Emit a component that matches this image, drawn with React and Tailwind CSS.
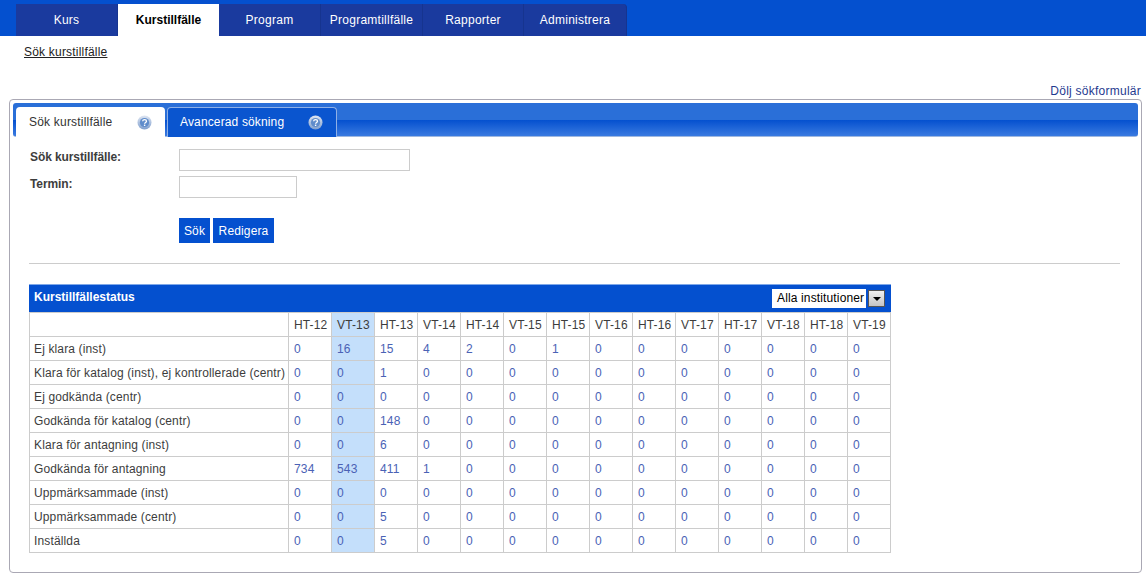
const navItems = [
  ["Kurs", "w-[102px]"],
  ["Kurstillfälle", "w-[101px]"],
  ["Program", "w-[102px]"],
  ["Programtillfälle", "w-[102px]"],
  ["Rapporter", "w-[101px]"],
  ["Administrera", "w-[103px]"],
];
const terms = ["HT-12", "VT-13", "HT-13", "VT-14", "HT-14", "VT-15", "HT-15", "VT-16", "HT-16", "VT-17", "HT-17", "VT-18", "HT-18", "VT-19"];
const rows = [
  ["Ej klara (inst)", [0, 16, 15, 4, 2, 0, 1]],
  ["Klara för katalog (inst), ej kontrollerade (centr)", [0, 0, 1]],
  ["Ej godkända (centr)", [0, 0, 0]],
  ["Godkända för katalog (centr)", [0, 0, 148]],
  ["Klara för antagning (inst)", [0, 0, 6]],
  ["Godkända för antagning", [734, 543, 411, 1]],
  ["Uppmärksammade (inst)", [0, 0, 0]],
  ["Uppmärksammade (centr)", [0, 0, 5]],
  ["Inställda", [0, 0, 5]],
];

function HelpIcon({ id }) {
  return (
    <svg width="15" height="15" viewBox="0 0 15 15">
      <defs>
        <linearGradient id={id} x1="0" y1="0" x2="0" y2="1">
          <stop offset="0" stopColor="#dfe6f2" />
          <stop offset="1" stopColor="#7f9fce" />
        </linearGradient>
      </defs>
      <circle cx="7.5" cy="7.5" r="7" fill={`url(#${id})`} />
      <circle cx="7.5" cy="7.5" r="4.6" fill="#5f8ccb" />
      <path d="M5.6 6.2c.2-2.2 3.9-2.2 3.9 0 0 1.3-1.9 1.3-1.9 2.6" fill="none" stroke="#fff" strokeWidth="1.3" />
      <rect x="6.9" y="9.6" width="1.4" height="1.4" fill="#fff" />
    </svg>
  );
}

export default function App() {
  return (
    <div className="w-[1146px] h-[579px] overflow-hidden bg-white text-[12px] tracking-[0.14px] text-[#3d3d3d] font-['Liberation_Sans',Arial,sans-serif]">
      <div className="h-9 bg-[#0450cf] pt-1 pl-4">
        <ul className="flex h-8">
          {navItems.map(([item, width], index) => (
            <li
              key={item}
              className={
                width + " flex items-center justify-center " +
                (index === 1
                  ? "bg-white text-black font-bold tracking-[0px]"
                  : "bg-[#1a3a9e] text-white tracking-[0.25px] border-r border-[#16348f] last:rounded-tr")
              }
            >
              {item}
            </li>
          ))}
        </ul>
      </div>

      <div className="pl-6 pt-[9px] h-[46px]">
        <a className="underline text-[#222] tracking-[0.2px] leading-[14px] block">Sök kurstillfälle</a>
      </div>

      <div className="h-[17px] pr-[5px] text-right text-[#1f3a8f] tracking-[0.25px] leading-[19px]">Dölj sökformulär</div>

      <div className="mx-[9px] w-[1133px] h-[474px] border border-[#aaa8b4] rounded-[4px] p-[3px]">
        <div className="relative h-[34px] rounded-[3px] bg-[linear-gradient(#2a6fd8_0,#2a6fd8_17px,#0450cf_17px,#3a7ae0_33px)] border-b border-[#9fb8e0] pt-1 pl-[3px] flex gap-[2px]">
          <div className="w-[149px] h-[30px] bg-white rounded-t-[4px] flex items-center justify-between pl-[13px] pr-[13px] text-[#333] tracking-[0.2px]">
            <span>Sök kurstillfälle</span>
            <HelpIcon id="help-a" />
          </div>
          <div className="w-[170px] h-[30px] bg-[#0a55cf] border border-b-0 border-[#8fb0e6] rounded-t-[4px] flex items-center justify-between pl-3 pr-[13px] pb-[1px] text-white">
            <span>Avancerad sökning</span>
            <HelpIcon id="help-b" />
          </div>
        </div>

        <div className="pl-4 pr-[18px]">
          <div className="flex pt-[12px] h-[39px]">
            <label className="w-[150px] pl-[1px] pt-[1px] font-bold tracking-[-0.1px] leading-[14px]">Sök kurstillfälle:</label>
            <input className="w-[231px] h-[22px] border border-[#ccc]" />
          </div>
          <div className="flex h-[42px]">
            <label className="w-[150px] pl-[1px] pt-[1px] font-bold tracking-[-0.1px] leading-[14px]">Termin:</label>
            <input className="w-[118px] h-[22px] border border-[#ccc]" />
          </div>
          <div className="flex gap-[3px] pl-[150px]">
            <button className="h-[25px] w-[31px] bg-[#0450cf] text-white">Sök</button>
            <button className="h-[25px] w-[61px] bg-[#0450cf] text-white">Redigera</button>
          </div>
          <div className="mt-5 border-t border-[#ccc]"></div>

          <div className="mt-5 w-[862px]">
            <div className="h-[29px] bg-[#0450cf] border-t border-[#7fa8e8] flex items-center justify-between pl-[5px] pr-[6px]">
              <span className="font-bold tracking-[0px] text-white -mt-[5px]">Kurstillfällestatus</span>
              <div className="flex items-center gap-[2px] -mt-[1px]">
                <div className="w-[94px] h-[19px] bg-white text-black pl-[5px] leading-[19px]">Alla institutioner</div>
                <div className="w-[17px] h-[17px] bg-[linear-gradient(#f0f0f0,#c4c4c4)] border border-[#555] flex items-center justify-center">
                  <span className="w-0 h-0 border-x-[4px] border-x-transparent border-t-[4px] border-t-black"></span>
                </div>
              </div>
            </div>
            <table className="table-fixed border-collapse w-[862px] -mt-px">
              <thead>
                <tr className="h-6">
                  <th className="w-[259px] border border-[#ccc]"></th>
                  {terms.map((term, index) => (
                    <th key={term} className={"font-normal text-left pl-[5px] border border-[#ccc] " + (index === 1 ? "bg-[#c4dffb]" : "")}>
                      {term}
                    </th>
                  ))}
                </tr>
              </thead>
              <tbody>
                {rows.map(([label, values]) => (
                  <tr key={label} className="h-6">
                    <td className="pl-1 border border-[#ccc] whitespace-nowrap">{label}</td>
                    {terms.map((term, index) => (
                      <td key={term} className={"pl-[5px] border border-[#ccc] text-[#4a62b5] " + (index === 1 ? "bg-[#c4dffb]" : "")}>
                        {values[index] ?? 0}
                      </td>
                    ))}
                  </tr>
                ))}
              </tbody>
            </table>
          </div>
        </div>
      </div>
    </div>
  );
}
